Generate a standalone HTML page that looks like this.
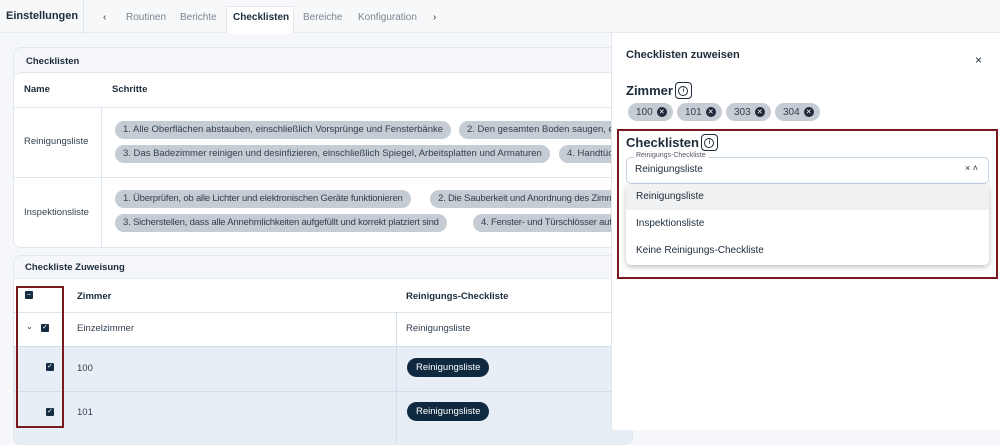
<!DOCTYPE html>
<html><head><meta charset="utf-8"><style>
*{box-sizing:border-box;margin:0;padding:0}
body{width:1000px;height:430px;overflow:hidden;background:#f5f7fa;font-family:"Liberation Sans",sans-serif;color:#1d2b3a;position:relative;font-size:10px}
.a{position:absolute}
.top{left:0;top:0;width:1000px;height:33px;background:#f6f8fa;border-bottom:1px solid #e6eaef}
.tab{top:12px;font-size:10px;color:#7b8591}
.chip{position:absolute;height:18px;line-height:18px;background:#c5ccd3;border-radius:9px;padding:0 8px;font-size:9.5px;color:#33414f;white-space:nowrap}
.card{background:#f4f6f9;border:1px solid #e3e8ee;border-radius:8px;overflow:hidden}
.hl{background:#dde5ef;height:1px}
.cb{position:absolute;width:8px;height:8px;background:#142c44;border-radius:1px;color:#fff;font-size:7px;line-height:8px;text-align:center}
.btn{position:absolute;left:407px;height:19px;line-height:19px;padding:0 9px;background:#0f2a40;color:#fff;border-radius:10px;font-size:9.5px}
.rc{position:absolute;height:18px;background:#c5ccd3;border-radius:9px;padding:0 6px 0 8px;font-size:10px;color:#33414f;display:flex;align-items:center}
.x{display:inline-flex;align-items:center;justify-content:center;width:10px;height:10px;border-radius:5px;background:#1d2b3a;color:#fff;font-size:7px;margin-left:4px}
.h{display:flex;align-items:center;font-weight:bold;font-size:13px}
.info{display:inline-flex;align-items:center;justify-content:center;width:17px;height:17px;border:1px solid #1d2b3a;border-radius:4px;margin-left:2px}
.info span{display:flex;align-items:center;justify-content:center;width:10px;height:10px;border:1px solid #1d2b3a;border-radius:5px;font-size:6px;font-weight:bold}
</style></head><body>
<div class="a top"></div>
<div class="a" style="left:6px;top:10px;font-size:11px;font-weight:bold">Einstellungen</div>
<div class="a" style="left:83px;top:0;width:1px;height:33px;background:#e3e7ec"></div>
<div class="a tab" style="left:103px;color:#333">‹</div>
<div class="a" style="left:226px;top:6px;width:68px;height:28px;background:#fff;border:1px solid #e3e7ec;border-bottom:none"></div>
<div class="a tab" style="left:126px">Routinen</div>
<div class="a tab" style="left:180px">Berichte</div>
<div class="a tab" style="left:233px;color:#1d2b3a;font-weight:bold">Checklisten</div>
<div class="a tab" style="left:303px">Bereiche</div>
<div class="a tab" style="left:358px">Konfiguration</div>
<div class="a tab" style="left:433px;color:#333">›</div>

<div class="a card" style="left:13px;top:47px;width:620px;height:201px">
 <div class="a" style="left:12px;top:8px;font-weight:bold;font-size:9.5px">Checklisten</div>
 <div class="a" style="left:0;top:24px;width:620px;height:177px;background:#fff;border-top:1px solid #e3e8ee;border-radius:8px 0 0 0"></div>
 <div class="a" style="left:10px;top:36px;font-weight:bold;font-size:9.5px">Name</div>
 <div class="a" style="left:98px;top:36px;font-weight:bold;font-size:9.5px">Schritte</div>
 <div class="a hl" style="left:0;top:59px;width:620px"></div>
 <div class="a hl" style="left:0;top:129px;width:620px"></div>
 <div class="a" style="left:87px;top:59px;width:1px;height:142px;background:#dde5ef"></div>
 <div class="a" style="left:10px;top:88px;font-size:9.5px;color:#33414f">Reinigungsliste</div>
 <div class="a" style="left:10px;top:159px;font-size:9.5px;color:#33414f">Inspektionsliste</div>
 <div class="chip" style="left:101px;top:73px">1. Alle Oberflächen abstauben, einschließlich Vorsprünge und Fensterbänke</div>
 <div class="chip" style="left:445px;top:73px">2. Den gesamten Boden saugen, einschließlich</div>
 <div class="chip" style="left:101px;top:97px">3. Das Badezimmer reinigen und desinfizieren, einschließlich Spiegel, Arbeitsplatten und Armaturen</div>
 <div class="chip" style="left:545px;top:97px">4. Handtücher</div>
 <div class="chip" style="left:101px;top:142px;letter-spacing:-.2px">1. Überprüfen, ob alle Lichter und elektronischen Geräte funktionieren</div>
 <div class="chip" style="left:416px;top:142px;letter-spacing:-.2px">2. Die Sauberkeit und Anordnung des Zimmers</div>
 <div class="chip" style="left:101px;top:166px;letter-spacing:-.2px">3. Sicherstellen, dass alle Annehmlichkeiten aufgefüllt und korrekt platziert sind</div>
 <div class="chip" style="left:459px;top:166px;letter-spacing:-.2px">4. Fenster- und Türschlösser auf</div>
</div>

<div class="a card" style="left:13px;top:255px;width:620px;height:190px">
 <div class="a" style="left:11px;top:6px;font-weight:bold;font-size:9.5px">Checkliste Zuweisung</div>
 <div class="a" style="left:0;top:22px;width:620px;height:34px;background:#fff;border-top:1px solid #e3e8ee"></div>
 <div class="a" style="left:0;top:56px;width:620px;height:34px;background:#fff;border-top:1px solid #dde5ef"></div>
 <div class="a" style="left:0;top:90px;width:620px;height:45px;background:#e8eef6;border-top:1px solid #d3deeb"></div>
 <div class="a" style="left:0;top:135px;width:620px;height:55px;background:#e8eef6;border-top:1px solid #d3deeb"></div>
 <div class="a" style="left:382px;top:56px;width:1px;height:134px;background:#d3deeb"></div>
 <div class="a" style="left:63px;top:35px;font-weight:bold;font-size:9.5px">Zimmer</div>
 <div class="a" style="left:392px;top:35px;font-weight:bold;font-size:9.5px">Reinigungs-Checkliste</div>
 <div class="a" style="left:63px;top:67px;font-size:9.5px;color:#33414f">Einzelzimmer</div>
 <div class="a" style="left:392px;top:67px;font-size:9.5px;color:#33414f">Reinigungsliste</div>
 <div class="a" style="left:63px;top:107px;font-size:9.5px;color:#33414f">100</div>
 <div class="a" style="left:63px;top:151px;font-size:9.5px;color:#33414f">101</div>
</div>
<div class="cb" style="left:25px;top:291px">–</div>
<div class="a" style="left:26px;top:322px;font-size:8px;color:#333">⌄</div>
<div class="cb" style="left:41px;top:324px">✓</div>
<div class="cb" style="left:46px;top:363px">✓</div>
<div class="cb" style="left:46px;top:408px">✓</div>
<div class="btn" style="top:358px">Reinigungsliste</div>
<div class="btn" style="top:402px">Reinigungsliste</div>
<div class="a" style="left:16px;top:286px;width:48px;height:142px;border:2px solid #7a1a1e"></div>

<div class="a" style="left:611px;top:33px;width:389px;height:397px;background:#fff;border-left:1px solid #e3e7ec"></div>
<div class="a" style="left:626px;top:49px;font-weight:bold;font-size:11px">Checklisten zuweisen</div>
<div class="a" style="left:975px;top:53px;font-size:12px">×</div>
<div class="a h" style="left:626px;top:82px">Zimmer<span class="info"><span>i</span></span></div>
<div class="rc" style="left:628px;top:103px">100<span class="x">✕</span></div>
<div class="rc" style="left:677px;top:103px">101<span class="x">✕</span></div>
<div class="rc" style="left:726px;top:103px">303<span class="x">✕</span></div>
<div class="rc" style="left:775px;top:103px">304<span class="x">✕</span></div>
<div class="a" style="left:617px;top:129px;width:381px;height:150px;border:2px solid #7a1a1e"></div>
<div class="a h" style="left:626px;top:134px">Checklisten<span class="info"><span>i</span></span></div>
<div class="a" style="left:626px;top:157px;width:363px;height:27px;border:1px solid #c4d3e6;border-radius:5px"></div>
<div class="a" style="left:634px;top:152px;font-size:7px;color:#556;background:#fff;padding:0 2px">Reinigungs-Checkliste</div>
<div class="a" style="left:635px;top:164px;font-size:10px">Reinigungsliste</div>
<div class="a" style="left:965px;top:163px;font-size:9px">× ˄</div>
<div class="a" style="left:626px;top:184px;width:363px;height:81px;background:#fff;border-radius:5px;box-shadow:0 2px 6px rgba(0,0,0,.25);overflow:hidden">
 <div style="height:26px;background:#f0f1f2;padding:7px 10px;font-size:10px">Reinigungsliste</div>
 <div style="height:27px;padding:8px 10px;font-size:10px">Inspektionsliste</div>
 <div style="height:28px;padding:8px 10px;font-size:10px">Keine Reinigungs-Checkliste</div>
</div>
</body></html>
